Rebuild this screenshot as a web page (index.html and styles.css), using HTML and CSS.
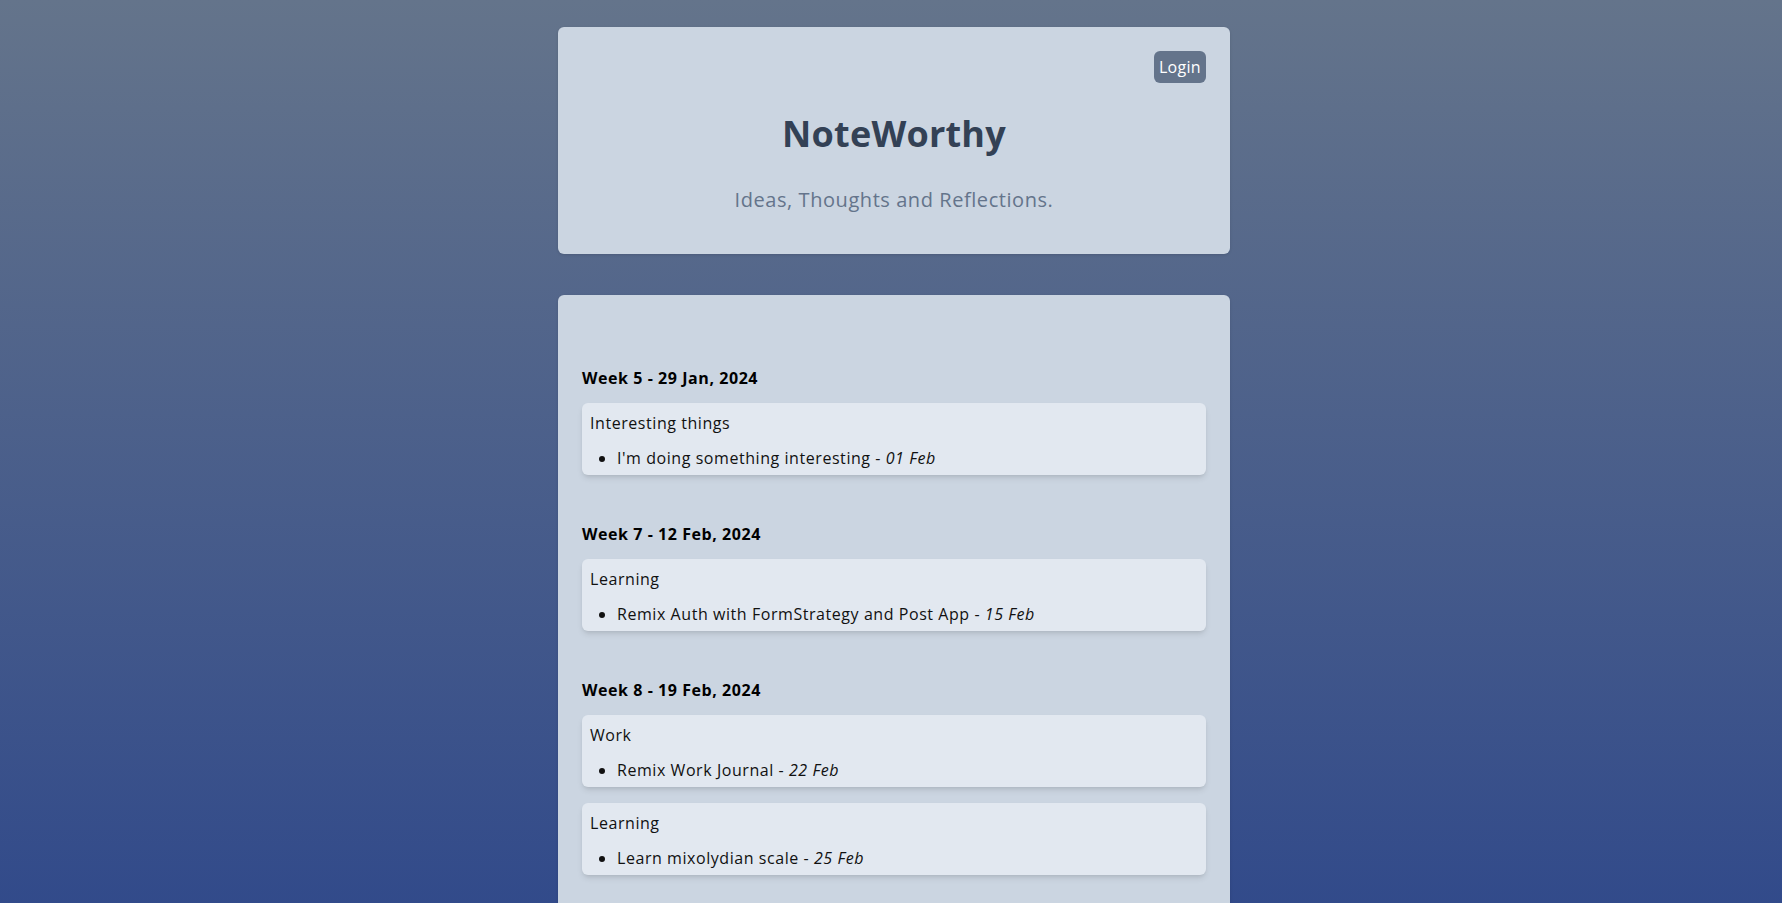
FILE: index.html
```html
<!DOCTYPE html>
<html lang="en">
<head>
<meta charset="utf-8">
<title>NoteWorthy</title>
<link rel="stylesheet" href="styles.css">
</head>
<body>
<div class="page">
  <header class="card header">
    <div class="header-bar">
      <button class="login">Login</button>
    </div>
    <h1 class="title">NoteWorthy</h1>
    <p class="subtitle">Ideas, Thoughts and Reflections.</p>
  </header>

  <main class="card content">
    <section class="week">
      <h2 class="week-title">Week 5 - 29 Jan, 2024</h2>
      <div class="note">
        <h3 class="note-title">Interesting things</h3>
        <ul class="note-list">
          <li>I'm doing something interesting - <em>01 Feb</em></li>
        </ul>
      </div>
    </section>

    <section class="week">
      <h2 class="week-title">Week 7 - 12 Feb, 2024</h2>
      <div class="note">
        <h3 class="note-title">Learning</h3>
        <ul class="note-list">
          <li>Remix Auth with FormStrategy and Post App - <em>15 Feb</em></li>
        </ul>
      </div>
    </section>

    <section class="week">
      <h2 class="week-title">Week 8 - 19 Feb, 2024</h2>
      <div class="note">
        <h3 class="note-title">Work</h3>
        <ul class="note-list">
          <li>Remix Work Journal - <em>22 Feb</em></li>
        </ul>
      </div>
      <div class="note">
        <h3 class="note-title">Learning</h3>
        <ul class="note-list">
          <li>Learn mixolydian scale - <em>25 Feb</em></li>
        </ul>
      </div>
    </section>
  </main>
</div>
</body>
</html>
```

FILE: styles.css
```css
* { box-sizing: border-box; }

html, body {
  margin: 0;
  padding: 0;
}

body {
  font-family: "Open Sans", "Noto Sans", sans-serif;
  font-size: 16px;
  line-height: 24px;
  letter-spacing: 0.035em;
  color: #111111;
  background-color: #1e3a8a;
  background-image: linear-gradient(to bottom, #64748b 0px, #1e3a8a 1260px);
  background-repeat: no-repeat;
  min-height: 1260px;
}

.page {
  width: 672px;
  margin: 0 auto;
  padding: 27px 0 48px;
  position: relative;
  left: 3px;
  display: flex;
  flex-direction: column;
  gap: 41px;
}

.card {
  background: #cbd5e1;
  border-radius: 6px;
  box-shadow: 0 1px 3px rgba(0, 0, 0, 0.12);
}

.header {
  padding: 24px 24px 40px;
  text-align: center;
}

.header-bar {
  display: flex;
  justify-content: flex-end;
}

.login {
  font-family: inherit;
  font-size: 16px;
  line-height: 24px;
  letter-spacing: 0.02em;
  color: #ffffff;
  background: #64748b;
  border: none;
  border-radius: 6px;
  padding: 4px 5px;
  cursor: pointer;
}

.title {
  margin: 31px 0 32px;
  font-size: 36px;
  line-height: 40px;
  font-weight: 700;
  letter-spacing: 0.006em;
  color: #334155;
}

.subtitle {
  margin: 0;
  font-size: 20px;
  line-height: 28px;
  color: #64748b;
}

.content {
  padding: 24px 24px 60px;
}

.week {
  margin-top: 47px;
  display: flex;
  flex-direction: column;
}

.week-title {
  margin: 0 0 13px;
  font-size: 16px;
  line-height: 24px;
  font-weight: 700;
  color: #000000;
}

.note {
  background: #e2e8f0;
  border-radius: 6px;
  padding: 8px 8px 5px;
  box-shadow: 0 4px 6px -1px rgba(0, 0, 0, 0.1), 0 2px 4px -2px rgba(0, 0, 0, 0.1);
}

.note + .note {
  margin-top: 16px;
}

.note-title {
  margin: 0 0 11px;
  font-size: 16px;
  line-height: 24px;
  font-weight: 400;
  color: #111111;
}

.note-list {
  margin: 0;
  padding-left: 27px;
  list-style: disc;
}

.note-list li {
  line-height: 24px;
}

.note-list em {
  font-style: italic;
}
```
